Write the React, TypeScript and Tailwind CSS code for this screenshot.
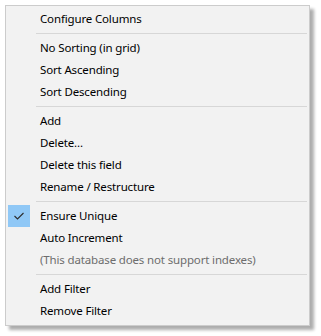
import React from "react";

type Item =
  | { kind: "item"; label: string; disabled?: boolean; checked?: boolean }
  | { kind: "sep" };

const items: Item[] = [
  { kind: "item", label: "Configure Columns" },
  { kind: "sep" },
  { kind: "item", label: "No Sorting (in grid)" },
  { kind: "item", label: "Sort Ascending" },
  { kind: "item", label: "Sort Descending" },
  { kind: "sep" },
  { kind: "item", label: "Add" },
  { kind: "item", label: "Delete..." },
  { kind: "item", label: "Delete this field" },
  { kind: "item", label: "Rename / Restructure" },
  { kind: "sep" },
  { kind: "item", label: "Ensure Unique", checked: true },
  { kind: "item", label: "Auto Increment" },
  { kind: "item", label: "(This database does not support indexes)", disabled: true },
  { kind: "sep" },
  { kind: "item", label: "Add Filter" },
  { kind: "item", label: "Remove Filter" },
];

export default function App() {
  return (
    <div className="w-[321px] h-[336px] bg-white p-[5px]">
      <div
        className="w-[305px] h-[321px] bg-[#f2f2f2] border border-[#cccccc] py-[2px] flex flex-col shadow-[4px_4px_3px_rgba(0,0,0,0.32)]"
        style={{ fontFamily: '"Noto Sans", "Open Sans", sans-serif' }}
      >
        {items.map((it, i) =>
          it.kind === "sep" ? (
            <div key={i} className="h-[7px] flex items-start pt-[3px] pl-[30px] pr-[2px]">
              <div className="h-px w-full bg-[#d7d7d7]" />
            </div>
          ) : (
            <div key={i} className="h-[22px] flex items-center pl-[2px]">
              <div className="w-[22px] h-[22px] flex items-center justify-center">
                {it.checked && (
                  <div className="w-[22px] h-[22px] bg-[#90c8f6] flex items-center justify-center">
                    <svg width="12" height="10" viewBox="0 0 12 10">
                      <polyline
                        points="1.5,5 4.5,8 10.5,2"
                        fill="none"
                        stroke="#2b2b2b"
                        strokeWidth="1.1"
                      />
                    </svg>
                  </div>
                )}
              </div>
              <span
                className={`ml-[10px] text-[11.5px] tracking-[-0.15px] leading-[22px] whitespace-nowrap ${
                  it.disabled ? "text-[#6d6d6d]" : "text-black"
                }`}
              >
                {it.label}
              </span>
            </div>
          )
        )}
      </div>
    </div>
  );
}
